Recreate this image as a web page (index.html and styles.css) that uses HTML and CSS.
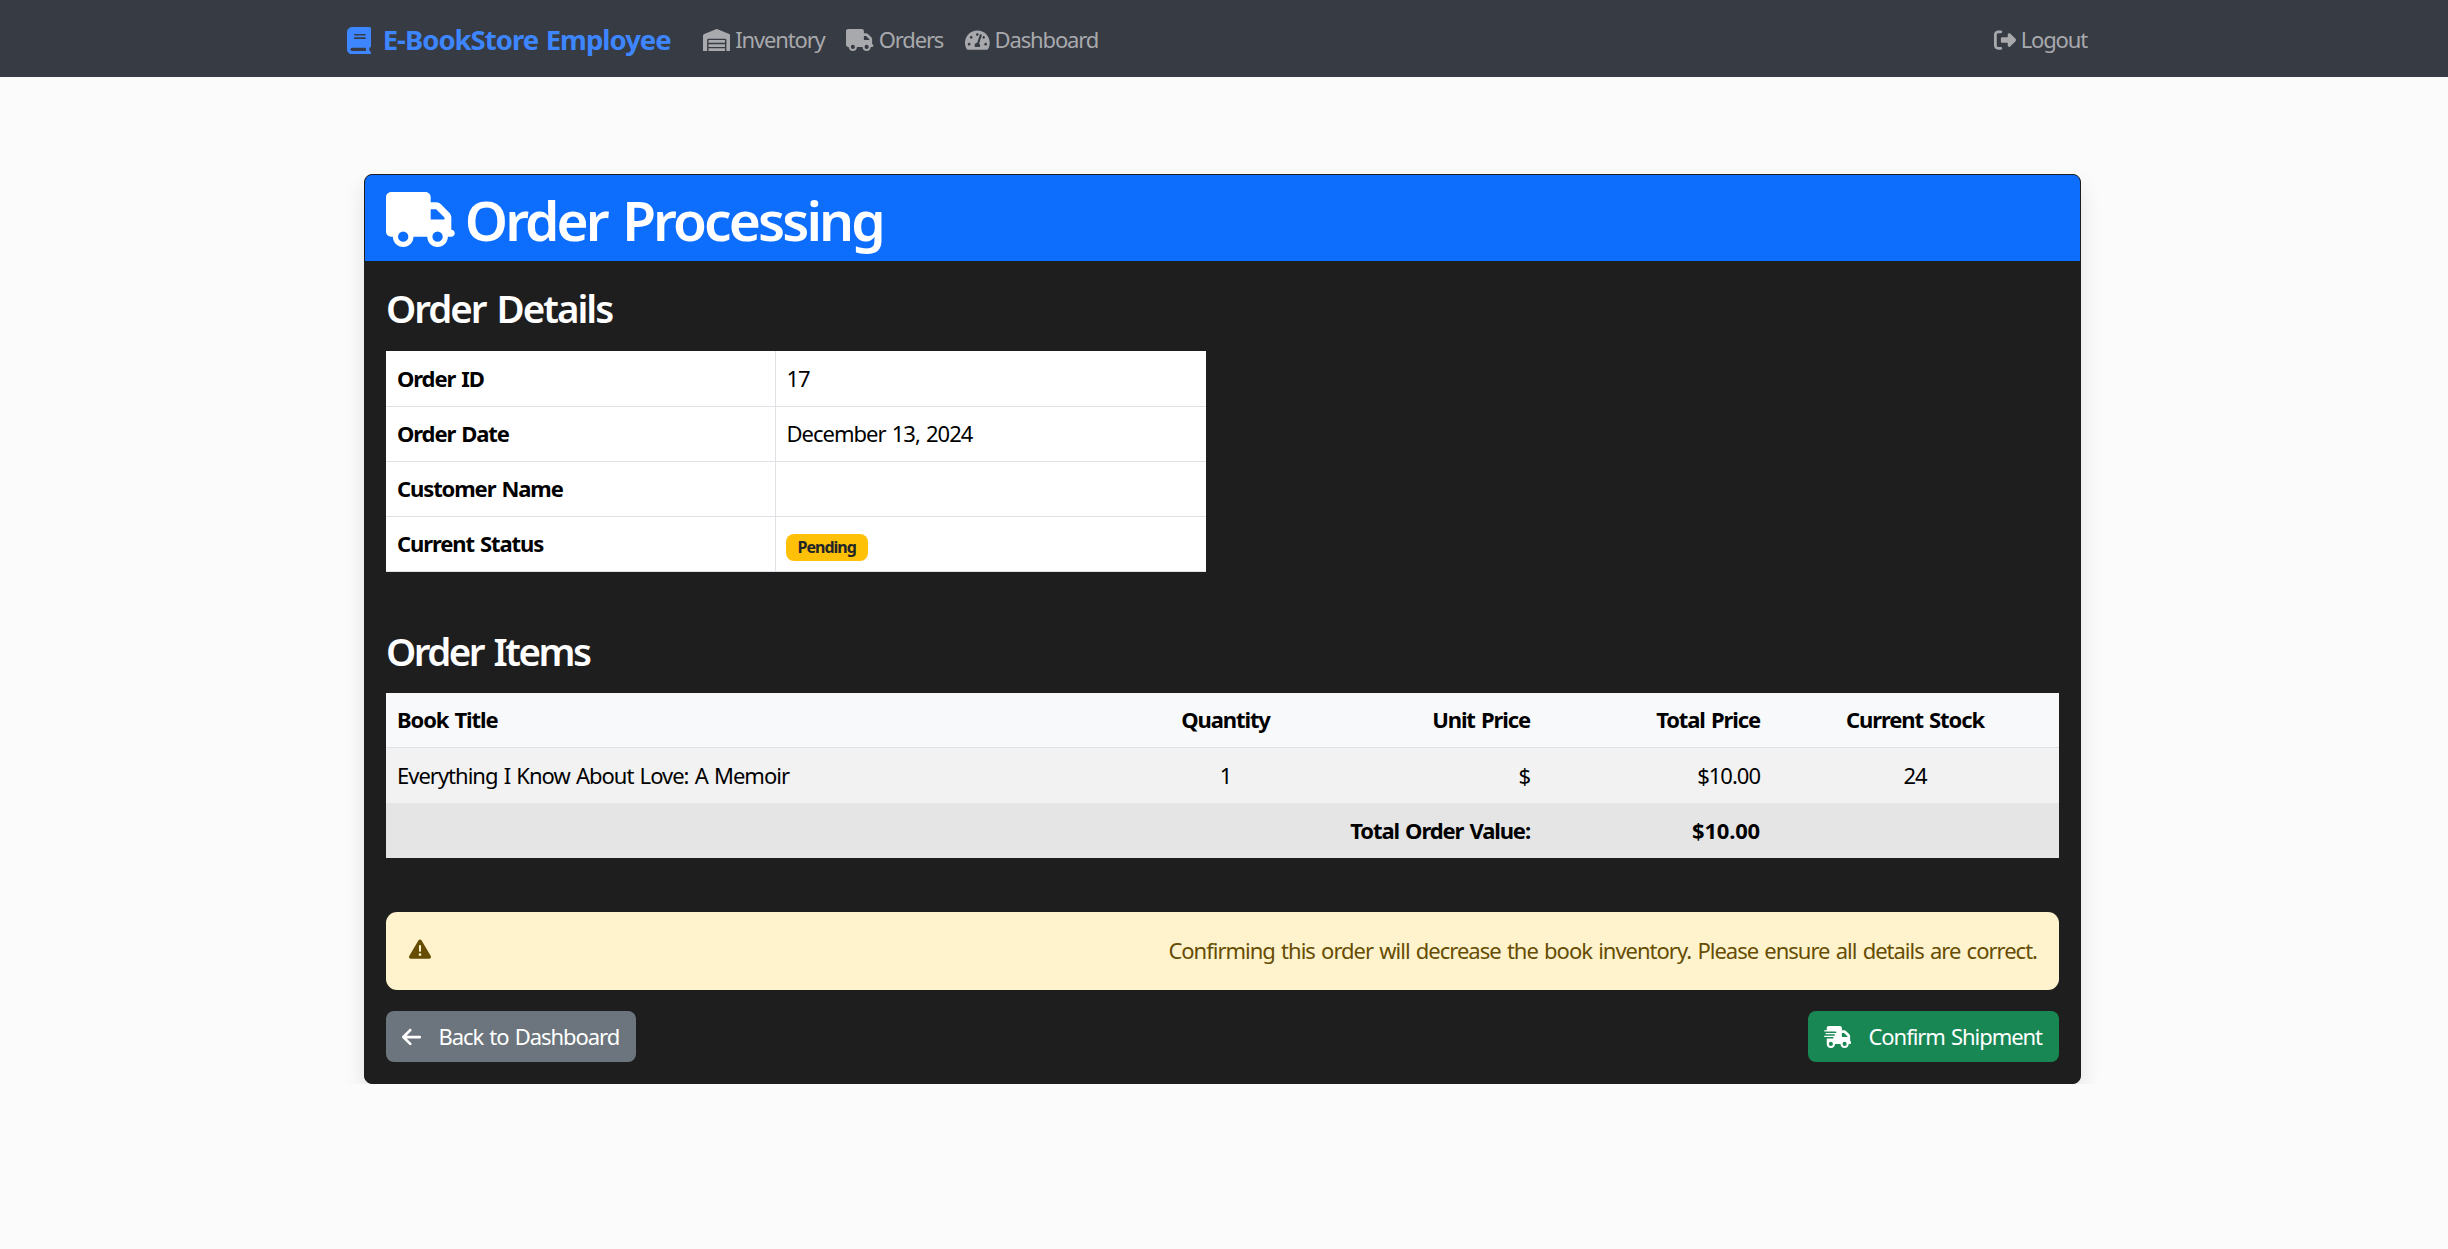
FILE: index.html
```html
<!DOCTYPE html>
<html lang="en">
<head>
    <meta charset="UTF-8">
    <meta name="viewport" content="width=device-width, initial-scale=1.0">
    <title>Order Processing</title>
    <link rel="stylesheet" href="styles.css">
</head>
<body>

    <nav class="navbar">
        <a class="brand" href="#">
            <svg class="icon brand-icon" viewBox="0 0 448 512"><path d="M96 0C43 0 0 43 0 96V416c0 53 43 96 96 96H384h32c17.7 0 32-14.3 32-32s-14.3-32-32-32V384c17.7 0 32-14.3 32-32V32c0-17.7-14.3-32-32-32H384 96zm0 384H352v64H96c-17.7 0-32-14.3-32-32s14.3-32 32-32zm32-240c0-8.8 7.2-16 16-16H336c8.8 0 16 7.2 16 16s-7.2 16-16 16H144c-8.8 0-16-7.2-16-16zm16 48H336c8.8 0 16 7.2 16 16s-7.2 16-16 16H144c-8.8 0-16-7.2-16-16s7.2-16 16-16z"/></svg>
            E-BookStore Employee
        </a>
        <div class="nav-links">
            <a class="nav-link" href="#">
                <svg class="icon" viewBox="0 0 640 512"><path d="M504 352H136.4c-4.4 0-8 3.6-8 8l-.1 48c0 4.4 3.6 8 8 8H504c4.4 0 8-3.6 8-8v-48c0-4.4-3.6-8-8-8zm0 96H136.1c-4.4 0-8 3.6-8 8l-.1 48c0 4.4 3.6 8 8 8h368c4.4 0 8-3.6 8-8v-48c0-4.4-3.6-8-8-8zm0-192H136.6c-4.4 0-8 3.6-8 8l-.1 48c0 4.4 3.6 8 8 8H504c4.4 0 8-3.6 8-8v-48c0-4.4-3.6-8-8-8zm106.5-139L338.4 3.7a48.15 48.15 0 0 0-36.9 0L29.5 117C11.7 124.5 0 141.9 0 161.3V504c0 4.4 3.6 8 8 8h80c4.4 0 8-3.6 8-8V256c0-17.6 14.6-32 32.6-32h382.8c18 0 32.6 14.4 32.6 32v248c0 4.4 3.6 8 8 8h80c4.4 0 8-3.6 8-8V161.3c0-19.4-11.7-36.8-29.5-44.3z"/></svg>
                Inventory
            </a>
            <a class="nav-link" href="#">
                <svg class="icon" viewBox="0 0 640 512"><path d="M48 0C21.5 0 0 21.5 0 48V368c0 26.5 21.5 48 48 48H64c0 53 43 96 96 96s96-43 96-96H384c0 53 43 96 96 96s96-43 96-96h32c17.7 0 32-14.3 32-32s-14.3-32-32-32V288 256 237.3c0-17-6.7-33.3-18.7-45.3L512 114.7c-12-12-28.3-18.7-45.3-18.7H416V48c0-26.5-21.5-48-48-48H48zM416 160h50.7L544 237.3V256H416V160zM112 416a48 48 0 1 1 96 0 48 48 0 1 1 -96 0zm368-48a48 48 0 1 1 0 96 48 48 0 1 1 0-96z"/></svg>
                Orders
            </a>
            <a class="nav-link" href="#">
                <svg class="icon" viewBox="0 0 576 512"><path d="M288 32C128.94 32 0 160.94 0 320c0 52.8 14.25 102.26 39.06 144.8 5.61 9.62 16.3 15.2 27.44 15.2h443c11.14 0 21.83-5.58 27.44-15.2C561.75 422.26 576 372.8 576 320c0-159.06-128.94-288-288-288zm0 64c14.71 0 26.58 10.13 30.32 23.65-1.11 2.26-2.64 4.23-3.45 6.67l-9.22 27.67c-5.13 3.49-10.97 6.01-17.64 6.01-17.67 0-32-14.33-32-32S270.33 96 288 96zM96 384c-17.67 0-32-14.33-32-32s14.33-32 32-32 32 14.33 32 32-14.33 32-32 32zm48-160c-17.67 0-32-14.33-32-32s14.33-32 32-32 32 14.33 32 32-14.33 32-32 32zm246.77-72.41l-61.33 184C343.13 347.33 352 364.54 352 384c0 11.72-3.38 22.55-8.88 32H232.88c-5.5-9.45-8.88-20.28-8.88-32 0-33.94 26.5-61.43 59.9-63.59l61.34-184.01c4.17-12.56 17.73-19.45 30.36-15.17 12.57 4.19 19.35 17.77 15.17 30.36zm14.66 57.2l15.52-46.55c3.47-1.29 7.13-2.23 11.05-2.23 17.67 0 32 14.33 32 32s-14.33 32-32 32c-11.38-.01-20.89-6.28-26.57-15.22zM480 384c-17.67 0-32-14.33-32-32s14.33-32 32-32 32 14.33 32 32-14.33 32-32 32z"/></svg>
                Dashboard
            </a>
        </div>
        <a class="nav-link logout" href="#">
            <svg class="icon" viewBox="0 0 512 512"><path d="M377.9 105.9L500.7 228.7c7.2 7.2 11.3 17.1 11.3 27.3s-4.1 20.1-11.3 27.3L377.9 406.1c-6.4 6.4-15 9.9-24 9.9c-18.7 0-33.9-15.2-33.9-33.9l0-62.1-128 0c-17.7 0-32-14.3-32-32l0-64c0-17.7 14.3-32 32-32l128 0 0-62.1c0-18.7 15.2-33.9 33.9-33.9c9 0 17.6 3.6 24 9.9zM160 96L96 96c-17.7 0-32 14.3-32 32l0 256c0 17.7 14.3 32 32 32l64 0c17.7 0 32 14.3 32 32s-14.3 32-32 32l-64 0c-53 0-96-43-96-96L0 128C0 75 43 32 96 32l64 0c17.7 0 32 14.3 32 32s-14.3 32-32 32z"/></svg>
            Logout
        </a>
    </nav>

    <div class="card">
        <div class="card-header">
            <svg class="icon header-icon" viewBox="0 0 640 512"><path d="M48 0C21.5 0 0 21.5 0 48V368c0 26.5 21.5 48 48 48H64c0 53 43 96 96 96s96-43 96-96H384c0 53 43 96 96 96s96-43 96-96h32c17.7 0 32-14.3 32-32s-14.3-32-32-32V288 256 237.3c0-17-6.7-33.3-18.7-45.3L512 114.7c-12-12-28.3-18.7-45.3-18.7H416V48c0-26.5-21.5-48-48-48H48zM416 160h50.7L544 237.3V256H416V160zM112 416a48 48 0 1 1 96 0 48 48 0 1 1 -96 0zm368-48a48 48 0 1 1 0 96 48 48 0 1 1 0-96z"/></svg>
            <h1>Order Processing</h1>
        </div>
        <div class="card-body">
            <h2>Order Details</h2>
            <table class="details-table">
                <tr><th>Order ID</th><td>17</td></tr>
                <tr><th>Order Date</th><td>December 13, 2024</td></tr>
                <tr><th>Customer Name</th><td></td></tr>
                <tr><th>Current Status</th><td><span class="badge">Pending</span></td></tr>
            </table>

            <h2 class="items-title">Order Items</h2>
            <table class="items-table">
                <thead>
                    <tr>
                        <th class="col-title">Book Title</th>
                        <th class="col-qty center">Quantity</th>
                        <th class="col-price right">Unit Price</th>
                        <th class="col-price right">Total Price</th>
                        <th class="col-stock center">Current Stock</th>
                    </tr>
                </thead>
                <tbody>
                    <tr class="item-row">
                        <td>Everything I Know About Love: A Memoir</td>
                        <td class="center">1</td>
                        <td class="right">$</td>
                        <td class="right">$10.00</td>
                        <td class="center">24</td>
                    </tr>
                    <tr class="total-row">
                        <th colspan="3" class="right">Total Order Value:</th>
                        <th class="right total-amount">$10.00</th>
                        <th></th>
                    </tr>
                </tbody>
            </table>

            <div class="alert">
                <svg class="icon alert-icon" viewBox="0 0 512 512"><path d="M256 32c14.2 0 27.3 7.5 34.5 19.8l216 368c7.3 12.4 7.3 27.7 .2 40.1S486.3 480 472 480H40c-14.3 0-27.6-7.7-34.7-20.1s-7-27.8 .2-40.1l216-368C228.7 39.5 241.8 32 256 32zm0 128c-13.3 0-24 10.7-24 24V296c0 13.3 10.7 24 24 24s24-10.7 24-24V184c0-13.3-10.7-24-24-24zm32 224a32 32 0 1 0 -64 0 32 32 0 1 0 64 0z"/></svg>
                <span>Confirming this order will decrease the book inventory. Please ensure all details are correct.</span>
            </div>

            <div class="actions">
                <button class="btn btn-back">
                    <svg class="icon" viewBox="0 0 448 512"><path d="M9.4 233.4c-12.5 12.5-12.5 32.8 0 45.3l160 160c12.5 12.5 32.8 12.5 45.3 0s12.5-32.8 0-45.3L109.2 288 416 288c17.7 0 32-14.3 32-32s-14.3-32-32-32l-306.7 0L214.6 118.6c12.5-12.5 12.5-32.8 0-45.3s-32.8-12.5-45.3 0l-160 160z"/></svg>
                    Back to Dashboard
                </button>
                <button class="btn btn-confirm">
                    <svg class="icon" viewBox="0 0 640 512"><path d="M112 0C85.5 0 64 21.5 64 48V96H16c-8.8 0-16 7.2-16 16s7.2 16 16 16H64 272c8.8 0 16 7.2 16 16s-7.2 16-16 16H64 48c-8.8 0-16 7.2-16 16s7.2 16 16 16H64 240c8.8 0 16 7.2 16 16s-7.2 16-16 16H64 16c-8.8 0-16 7.2-16 16s7.2 16 16 16H64 208c8.8 0 16 7.2 16 16s-7.2 16-16 16H64V416c0 53 43 96 96 96s96-43 96-96H384c0 53 43 96 96 96s96-43 96-96h32c17.7 0 32-14.3 32-32s-14.3-32-32-32V288 256 237.3c0-17-6.7-33.3-18.7-45.3L512 114.7c-12-12-28.3-18.7-45.3-18.7H416V48c0-26.5-21.5-48-48-48H112zM544 237.3V256H416V160h50.7L544 237.3zM160 368a48 48 0 1 1 0 96 48 48 0 1 1 0-96zm272 48a48 48 0 1 1 96 0 48 48 0 1 1 -96 0z"/></svg>
                    Confirm Shipment
                </button>
            </div>
        </div>
    </div>

</body>
</html>
```

FILE: styles.css
```css
body {
    font-family: "Noto Sans", "Open Sans", sans-serif;
    font-size: 22px;
    line-height: 33px;
    letter-spacing: -1px;
    word-spacing: 1.5px;
    margin: 0;
    padding: 0;
    background-color: #fbfbfb;
    color: #000;
}

.icon {
    height: 22px;
    fill: currentColor;
    vertical-align: -3px;
}

/* Navbar */
.navbar {
    height: 77px;
    display: flex;
    align-items: center;
    padding: 2px 361px 0 347px;
    background-color: #373b43;
    box-sizing: border-box;
}

.brand {
    color: #3d86ff;
    font-size: 27.5px;
    font-weight: 700;
    text-decoration: none;
    white-space: nowrap;
    margin-right: 32px;
}

.brand-icon {
    height: 27.5px;
    margin-right: 4px;
    vertical-align: -4px;
}

.nav-links {
    display: flex;
    gap: 21.5px;
}

.nav-link {
    color: #a8a9ad;
    text-decoration: none;
    white-space: nowrap;
    letter-spacing: -1.15px;
    word-spacing: 0.5px;
}

.logout {
    margin-left: auto;
}

/* Card */
.card {
    width: 1717px;
    margin: 97px 0 0 364px;
    background-color: #1e1e1e;
    border: 1px solid #1e1e1e;
    border-radius: 8px;
    box-shadow: 0 11px 22px rgba(0, 0, 0, 0.1);
    box-sizing: border-box;
    overflow: hidden;
}

.card-header {
    height: 86px;
    display: flex;
    align-items: center;
    gap: 10px;
    padding: 3px 21px 0;
    background-color: #0d6efd;
    color: #fff;
    box-sizing: border-box;
}

.header-icon {
    height: 55px;
}

h1 {
    margin: 0;
    font-size: 55px;
    font-weight: 600;
    line-height: 66px;
    letter-spacing: -2.9px;
    word-spacing: 4px;
}

.card-body {
    padding: 24px 21px 21px;
    color: #fff;
}

h2 {
    margin: 0 0 20px;
    font-size: 38.5px;
    font-weight: 600;
    line-height: 46px;
    letter-spacing: -2px;
    word-spacing: 3px;
}

/* Tables */
table {
    border-collapse: collapse;
    color: #000;
}

th, td {
    padding: 0 11px;
    height: 55px;
    box-sizing: border-box;
    text-align: left;
}

th {
    letter-spacing: -1.1px;
}

.details-table {
    width: 820px;
    background-color: #fff;
}

.details-table tr {
    border-bottom: 1px solid #dee2e6;
}

.details-table th {
    width: 389px;
    border-right: 1px solid #dee2e6;
}

.badge {
    display: inline-block;
    margin-left: -1px;
    padding: 0 12px;
    height: 27px;
    line-height: 27px;
    font-size: 16px;
    font-weight: 700;
    border-radius: 8px;
    background-color: #ffc107;
    color: #212529;
    vertical-align: -1px;
}

.items-title {
    margin-top: 56px;
    margin-bottom: 19px;
    letter-spacing: -2.5px;
}

.items-table {
    width: 1673px;
    table-layout: fixed;
}

.items-table thead tr {
    background-color: #f8f9fa;
    border-bottom: 1px solid #dee2e6;
}

.item-row {
    background-color: #f2f2f2;
}

.total-row {
    background-color: #e5e5e5;
}

.total-amount {
    letter-spacing: -0.2px;
}

.col-title { width: 754px; }
.col-qty { width: 171px; }
.col-price { width: 230px; }

.center { text-align: center; }
.right { text-align: right; }

/* Alert */
.alert {
    height: 78px;
    margin-top: 54px;
    padding: 0 22px;
    display: flex;
    align-items: center;
    justify-content: space-between;
    background-color: #fff3cd;
    border-radius: 11px;
    color: #664d03;
    box-sizing: border-box;
}

.alert-icon {
    height: 22px;
    margin: 0 0 3px 1px;
}

/* Buttons */
.actions {
    display: flex;
    justify-content: space-between;
    margin-top: 21px;
}

.btn {
    height: 51px;
    padding: 0 17px 0 16px;
    border: none;
    border-radius: 8px;
    color: #fff;
    font: inherit;
    letter-spacing: -1.05px;
    word-spacing: inherit;
    cursor: pointer;
}

.btn .icon {
    margin-right: 11px;
}

.btn-back {
    background-color: #6c757d;
}

.btn-confirm {
    background-color: #198754;
}
```
